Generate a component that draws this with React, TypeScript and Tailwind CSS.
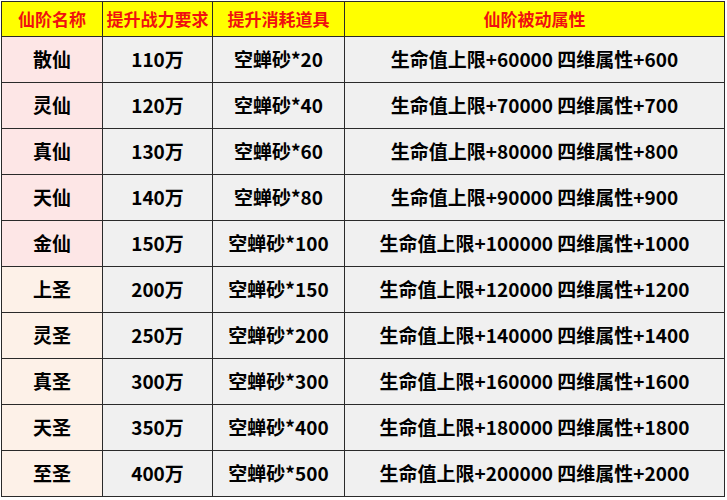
const rows = [
  ["散仙", "110万", "空蝉砂*20", "生命值上限+60000 四维属性+600"],
  ["灵仙", "120万", "空蝉砂*40", "生命值上限+70000 四维属性+700"],
  ["真仙", "130万", "空蝉砂*60", "生命值上限+80000 四维属性+800"],
  ["天仙", "140万", "空蝉砂*80", "生命值上限+90000 四维属性+900"],
  ["金仙", "150万", "空蝉砂*100", "生命值上限+100000 四维属性+1000"],
  ["上圣", "200万", "空蝉砂*150", "生命值上限+120000 四维属性+1200"],
  ["灵圣", "250万", "空蝉砂*200", "生命值上限+140000 四维属性+1400"],
  ["真圣", "300万", "空蝉砂*300", "生命值上限+160000 四维属性+1600"],
  ["天圣", "350万", "空蝉砂*400", "生命值上限+180000 四维属性+1800"],
  ["至圣", "400万", "空蝉砂*500", "生命值上限+200000 四维属性+2000"],
];

const headers = ["仙阶名称", "提升战力要求", "提升消耗道具", "仙阶被动属性"];

export default function App() {
  return (
    <div
      className="w-[727px] h-[500px] bg-white pt-px pl-px"
      style={{ fontFamily: '"Noto Sans CJK SC", "Noto Sans", sans-serif' }}
    >
      <table className="w-[724px] border-collapse border border-[#9a9a9a] table-fixed">
        <colgroup>
          <col className="w-[101px]" />
          <col className="w-[110px]" />
          <col className="w-[132px]" />
          <col />
        </colgroup>
        <thead>
          <tr className="h-[35px] bg-[#ffff00]">
            {headers.map((h) => (
              <th
                key={h}
                className="border border-[#2a2a2a] text-[17px] font-bold text-[#f01010] text-center p-0"
              >
                {h}
              </th>
            ))}
          </tr>
        </thead>
        <tbody>
          {rows.map((r, i) => (
            <tr key={r[0]} className="h-[46px]">
              <td
                className={`border border-[#2a2a2a] text-center text-[19px] font-bold text-black p-0 ${
                  i < 5 ? "bg-[#fde6e6]" : "bg-[#fdf1e8]"
                }`}
              >
                {r[0]}
              </td>
              {r.slice(1).map((c, j) => (
                <td
                  key={j}
                  className="border border-[#2a2a2a] bg-[#f0f0f0] text-center text-[19px] font-bold text-black p-0 whitespace-nowrap"
                >
                  {c}
                </td>
              ))}
            </tr>
          ))}
        </tbody>
      </table>
    </div>
  );
}
